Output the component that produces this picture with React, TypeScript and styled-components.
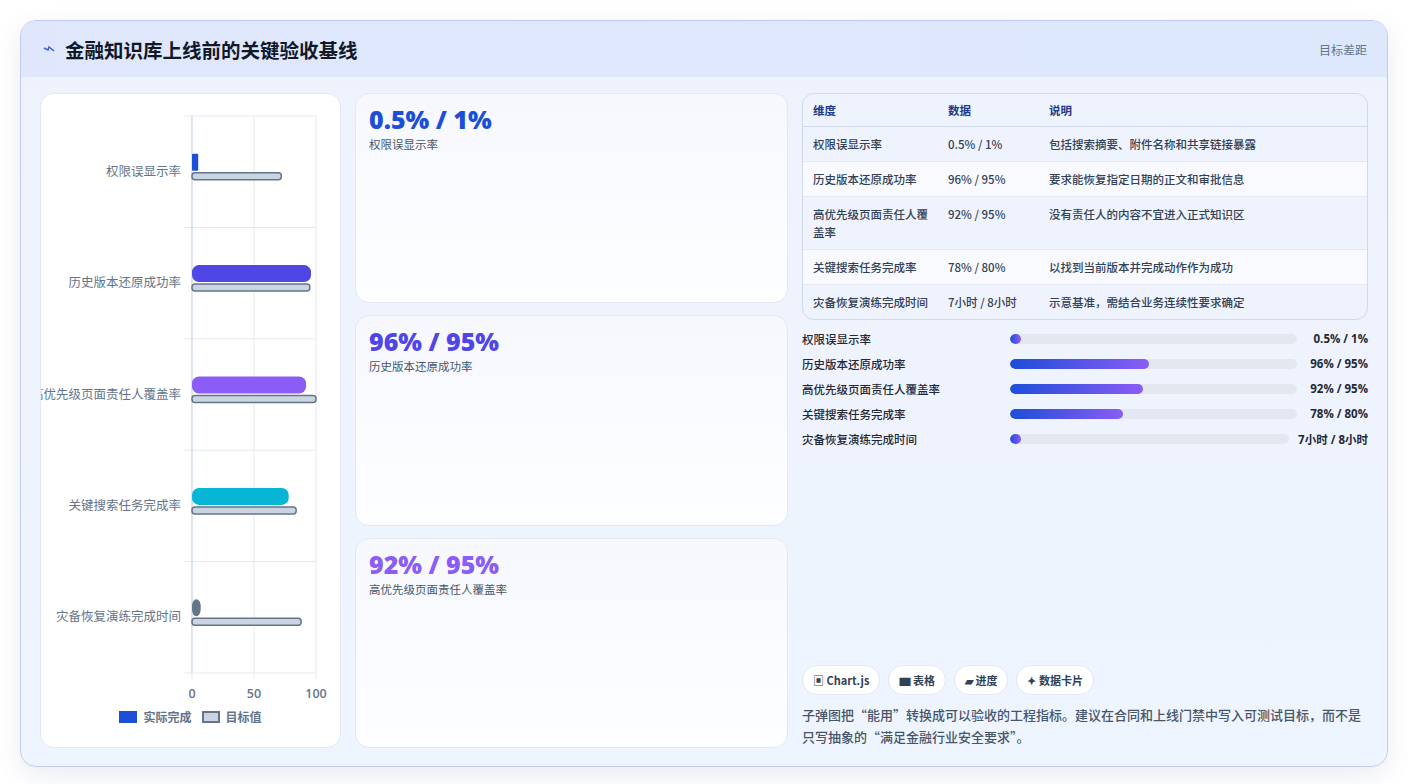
import styled, { createGlobalStyle } from "styled-components";

const Global = createGlobalStyle`
  html, body { margin: 0; padding: 0; background: #ffffff; }
  body { font-family: "Noto Sans CJK SC", "Noto Sans", sans-serif; }
`;

const rows = [
  { name: "权限误显示率", data: "0.5% / 1%", note: "包括搜索摘要、附件名称和共享链接暴露", bar: 5, target: 72, color: "#1d4ed8", progress: 1.5, tall: false },
  { name: "历史版本还原成功率", data: "96% / 95%", note: "要求能恢复指定日期的正文和审批信息", bar: 96, target: 95, color: "#4f46e5", progress: 48.5, tall: false },
  { name: "高优先级页面责任人覆盖率", data: "92% / 95%", note: "没有责任人的内容不宜进入正式知识区", bar: 92, target: 100, color: "#8b5cf6", progress: 46.5, tall: true },
  { name: "关键搜索任务完成率", data: "78% / 80%", note: "以找到当前版本并完成动作作为成功", bar: 78, target: 84, color: "#06b6d4", progress: 39.5, tall: false },
  { name: "灾备恢复演练完成时间", data: "7小时 / 8小时", note: "示意基准，需结合业务连续性要求确定", bar: 7, target: 88, color: "#64748b", progress: 1.5, tall: true },
];

const Frame = styled.div`
  margin: 20px;
  height: 745px;
  border: 1px solid #c3cceb;
  border-radius: 16px;
  background: linear-gradient(180deg, #eef2fd 0%, #eef5ff 100%);
  box-shadow: 0 8px 24px rgba(80, 100, 160, 0.12);
  overflow: hidden;
  display: flex;
  flex-direction: column;
`;

const Header = styled.div`
  height: 56px;
  flex: none;
  background: linear-gradient(90deg, #e0e7fc, #dde8fd);
  display: flex;
  align-items: center;
  justify-content: space-between;
  padding: 0 20px 0 22px;
`;

const Title = styled.h1`
  margin: 0;
  font-size: 19.5px;
  font-weight: 700;
  color: #111827;
  display: flex;
  align-items: center;
  gap: 10px;
`;

const HeaderNote = styled.span`
  font-size: 12px;
  color: #64748b;
`;

const Body = styled.div`
  flex: 1;
  display: grid;
  grid-template-columns: 301px 433px 1fr;
  gap: 14px;
  padding: 16px 19px 18px 19px;
  min-height: 0;
`;

const ChartCard = styled.div`
  background: #fff;
  border: 1px solid #e3e8f4;
  border-radius: 14px;
  display: flex;
  flex-direction: column;
  align-items: center;
  overflow: hidden;
`;

const Legend = styled.div`
  display: flex;
  gap: 10px;
  font-size: 12px;
  font-weight: 600;
  color: #64748b;
  align-items: center;
  margin-top: 4px;
`;

const LegendItem = styled.span`
  display: flex;
  align-items: center;
  gap: 6px;
`;

const Swatch = styled.i<{ $fill: string; $border?: string }>`
  width: 18px;
  height: 12px;
  background: ${(p) => p.$fill};
  border: ${(p) => (p.$border ? `2px solid ${p.$border}` : "none")};
  box-sizing: border-box;
`;

const Cards = styled.div`
  display: grid;
  grid-template-rows: repeat(3, 1fr);
  gap: 12px;
`;

const StatCard = styled.div`
  background: linear-gradient(180deg, #f6f8fe, #fdfeff);
  border: 1px solid #e3e8f4;
  border-radius: 14px;
  padding: 9px 13px;
`;

const StatValue = styled.div<{ $color: string }>`
  font-family: "Open Sans", "Noto Sans", sans-serif;
  font-size: 25px;
  font-weight: 800;
  line-height: 32px;
  color: ${(p) => p.$color};
`;

const StatLabel = styled.div`
  font-size: 11.5px;
  color: #475569;
  margin-top: 1px;
`;

const Right = styled.div`
  display: flex;
  flex-direction: column;
`;

const Table = styled.div`
  border: 1px solid #d1d9ea;
  border-radius: 12px;
  overflow: hidden;
  background: #eff3fd;
`;

const TRow = styled.div<{ $head?: boolean; $alt?: boolean }>`
  display: grid;
  grid-template-columns: 135px 101px 1fr;
  padding: ${(p) => (p.$head ? "7px 10px" : "8px 10px")};
  border-bottom: ${(p) => (p.$head ? "1px solid #d1d9ea" : "1px solid #e4e9f4")};
  background: ${(p) => (p.$alt ? "#f8faff" : "transparent")};
  font-size: 11.5px;
  line-height: 18px;
  font-weight: ${(p) => (p.$head ? 700 : 500)};
  color: ${(p) => (p.$head ? "#1e3a8a" : "#334155")};
  &:last-child { border-bottom: none; }
  & > span:first-child { padding-right: 14px; }
`;

const Progress = styled.div`
  display: flex;
  flex-direction: column;
  gap: 6px;
  margin-top: 9px;
`;

const PRow = styled.div`
  display: flex;
  align-items: center;
  font-size: 11.5px;
  height: 19px;
  color: #1f2937;
`;

const PLabel = styled.span`
  width: 208px;
  flex: none;
  font-weight: 500;
`;

const Track = styled.div`
  flex: 1;
  height: 10px;
  border-radius: 5px;
  background: #e2e7f0;
  overflow: hidden;
`;

const Fill = styled.div`
  height: 100%;
  border-radius: 5px;
  background: linear-gradient(90deg, #1d4ed8, #8b5cf6);
  min-width: 11px;
`;

const PValue = styled.span`
  flex: none;
  margin-left: 9px;
  font-weight: 700;
  font-family: "Open Sans", "Noto Sans", "Noto Sans CJK SC", sans-serif;
  color: #1f2937;
  min-width: 62px;
  text-align: right;
`;

const Spacer = styled.div`
  flex: 1;
`;

const Chips = styled.div`
  display: flex;
  gap: 8px;
`;

const Chip = styled.span`
  background: #fff;
  border: 1px solid #e3e8f4;
  border-radius: 15px;
  padding: 0 10px;
  height: 28px;
  display: flex;
  align-items: center;
  gap: 3px;
  font-size: 11px;
  font-weight: 700;
  color: #334155;
`;

const Summary = styled.p`
  margin: 9px 0 0;
  font-size: 13px;
  line-height: 22px;
  color: #475569;
  font-weight: 500;
`;

const Chart = () => {
  const x0 = 151;
  const scale = 1.24;
  const top = 22;
  const band = 111.4;
  return (
    <svg width="300" height="610" viewBox="0 0 300 610">
      {[0, 50, 100].map((v) => (
        <line key={v} x1={x0 + v * scale} x2={x0 + v * scale} y1={top} y2={top + band * 5 + 6} stroke="#e5e9f0" />
      ))}
      {[0, 1, 2, 3, 4, 5].map((i) => (
        <line key={i} x1={x0 - 8} x2={x0 + 124} y1={top + band * i} y2={top + band * i} stroke="#e5e9f0" />
      ))}
      <line x1={x0} x2={x0} y1={top} y2={top + band * 5} stroke="#cbd5e1" />
      {rows.map((r, i) => {
        const cy = top + band * i + band / 2;
        return (
          <g key={r.name}>
            <text x={x0 - 11} y={cy + 4} textAnchor="end" fontSize="12.5" fill="#64748b" fontFamily="Noto Sans CJK SC, sans-serif">
              {r.name}
            </text>
            <rect x={x0} y={cy - 18} width={Math.max(r.bar * scale, 6)} height={17} rx={i === 0 ? 1 : 7} fill={r.color} />
            <rect x={x0} y={cy + 1} width={r.target * scale} height={7} rx={3} fill="#cbd5e1" stroke="#64748b" strokeWidth="1.5" />
          </g>
        );
      })}
      {[0, 50, 100].map((v) => (
        <text key={v} x={x0 + v * scale} y={top + band * 5 + 25} textAnchor="middle" fontSize="12.5" fontWeight="600" fill="#64748b" fontFamily="Open Sans, sans-serif">
          {v}
        </text>
      ))}
    </svg>
  );
};

export default function App() {
  const stats = [
    { v: "0.5% / 1%", l: "权限误显示率", c: "#1d4ed8" },
    { v: "96% / 95%", l: "历史版本还原成功率", c: "#4f46e5" },
    { v: "92% / 95%", l: "高优先级页面责任人覆盖率", c: "#8b5cf6" },
  ];
  return (
    <>
      <Global />
      <Frame>
        <Header>
          <Title>
            <svg width="12" height="10" viewBox="0 0 12 10">
              <path d="M1 4 L5 6 L6 3 L11 7" fill="none" stroke="#3b5bdb" strokeWidth="1.4" />
            </svg>
            金融知识库上线前的关键验收基线
          </Title>
          <HeaderNote>目标差距</HeaderNote>
        </Header>
        <Body>
          <ChartCard>
            <Chart />
            <Legend>
              <LegendItem>
                <Swatch $fill="#1d4ed8" />实际完成
              </LegendItem>
              <LegendItem>
                <Swatch $fill="#cbd5e1" $border="#64748b" />目标值
              </LegendItem>
            </Legend>
          </ChartCard>
          <Cards>
            {stats.map((s) => (
              <StatCard key={s.l}>
                <StatValue $color={s.c}>{s.v}</StatValue>
                <StatLabel>{s.l}</StatLabel>
              </StatCard>
            ))}
          </Cards>
          <Right>
            <Table>
              <TRow $head>
                <span>维度</span>
                <span>数据</span>
                <span>说明</span>
              </TRow>
              {rows.map((r, i) => (
                <TRow key={r.name} $alt={i % 2 === 1}>
                  <span>{r.name}</span>
                  <span>{r.data}</span>
                  <span>{r.note}</span>
                </TRow>
              ))}
            </Table>
            <Progress>
              {rows.map((r) => (
                <PRow key={r.name}>
                  <PLabel>{r.name}</PLabel>
                  <Track>
                    <Fill style={{ width: `${r.progress}%` }} />
                  </Track>
                  <PValue>{r.data}</PValue>
                </PRow>
              ))}
            </Progress>
            <Spacer />
            <Chips>
              <Chip>▣ Chart.js</Chip>
              <Chip>▆ 表格</Chip>
              <Chip>▰ 进度</Chip>
              <Chip>✦ 数据卡片</Chip>
            </Chips>
            <Summary>
              子弹图把“能用”转换成可以验收的工程指标。建议在合同和上线门禁中写入可测试目标，而不是只写抽象的“满足金融行业安全要求”。
            </Summary>
          </Right>
        </Body>
      </Frame>
    </>
  );
}
